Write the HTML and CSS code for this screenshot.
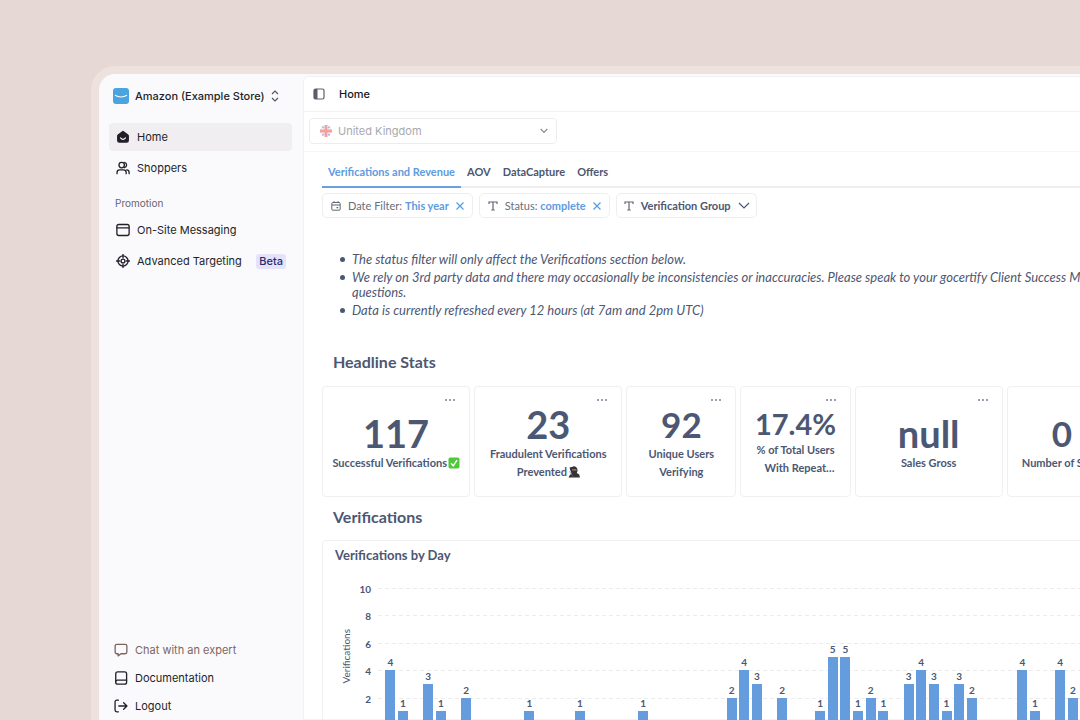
FILE: index.html
```html
<!DOCTYPE html>
<html lang="en">
<head>
<meta charset="utf-8">
<title>Home</title>
<link rel="stylesheet" href="styles.css">
</head>
<body>
<div class="frame">
  <aside class="sidebar">
    <button class="store" type="button">
      <svg class="store-logo" viewBox="0 0 16 16"><rect width="16" height="16" rx="3" fill="#4ba3df"/><path d="M2 7.300q6 3.400 12 0" fill="none" stroke="#fff" stroke-width="1.100"/></svg>
      <span>Amazon (Example Store)</span>
      <svg class="sort" viewBox="0 0 8 12"><path d="M1 4l3-3 3 3M1 8l3 3 3-3" fill="none" stroke="#55555e" stroke-width="1.200"/></svg>
    </button>
    <nav class="nav">
      <a class="nav-item active" href="#home">
        <svg class="icon" viewBox="0 0 16 16"><path d="M7 1.300a1.700 1.700 0 0 1 2 0l5 3.700q.8.700.8 1.700V12a2.700 2.700 0 0 1-2.700 2.700H3.900A2.700 2.700 0 0 1 1.200 12V6.700q0-1 .8-1.700z" fill="#221f29"/><path d="M5.200 9q2.800 3.400 5.600 0" fill="none" stroke="#fff" stroke-width="1.300" stroke-linecap="round"/></svg>
        Home</a>
      <a class="nav-item" href="#shoppers">
        <svg class="icon line" viewBox="0 0 16 16"><circle cx="6.500" cy="4.700" r="3.100"/><path d="M1.200 14.500v-1.300a3 3 0 0 1 3-3h4.400a3 3 0 0 1 3 3v1.300M9.800 1.600a3.100 3.100 0 0 1 0 6M12.300 10.200a3 3 0 0 1 2.700 3v1.300"/></svg>
        Shoppers</a>
    </nav>
    <h2 class="group">Promotion</h2>
    <nav class="nav">
      <a class="nav-item" href="#messaging">
        <svg class="icon line" viewBox="0 0 16 16"><rect x="1" y="1.700" width="14" height="12.600" rx="2.200"/><path d="M1 5.500h14"/></svg>
        On-Site Messaging</a>
      <a class="nav-item" href="#targeting">
        <svg class="icon line" viewBox="0 0 16 16"><circle cx="8" cy="8" r="5.800"/><circle cx="8" cy="8" r="2.200"/><path d="M8 .5v3.800M8 11.700v3.800M.5 8h3.800M11.700 8h3.800"/></svg>
        Advanced Targeting <span class="beta">Beta</span></a>
    </nav>
    <nav class="nav-foot">
      <a class="foot-item chat" href="#chat">
        <svg class="icon line" viewBox="0 0 16 16"><path d="M3.200 1.500h9.600a1.900 1.900 0 0 1 1.900 1.900v7a1.900 1.900 0 0 1-1.900 1.900H8L4.700 14.700v-2.400H3.200a1.900 1.900 0 0 1-1.900-1.900v-7a1.900 1.900 0 0 1 1.900-1.900z"/></svg>
        Chat with an expert</a>
      <a class="foot-item" href="#docs">
        <svg class="icon line" viewBox="0 0 16 16"><rect x="2" y="1" width="12.400" height="14" rx="2.200"/><path d="M2 12a1.800 1.800 0 0 1 1.800-1.500h10.600"/></svg>
        Documentation</a>
      <a class="foot-item" href="#logout">
        <svg class="icon line" viewBox="0 0 16 16"><path d="M5 1.300H3.200A2 2 0 0 0 1.200 3.300v9.400a2 2 0 0 0 2 2H5M5.500 8h9.200M11 4.200L14.800 8 11 11.800"/></svg>
        Logout</a>
    </nav>
  </aside>

  <main class="panel">
    <header class="topbar">
      <button class="plain" type="button" aria-label="Toggle sidebar"><svg class="toggle" viewBox="0 0 12 12"><rect x="1" y="1" width="10" height="10" rx="1.500" fill="none" stroke="#5d5d69" stroke-width="1.200"/><path d="M1 1h3.500v10H1z" fill="#5d5d69"/></svg></button>
      <h1>Home</h1>
    </header>
    <div class="region-row">
      <label class="region">
        <svg class="flag" viewBox="0 0 12 12"><circle cx="6" cy="6" r="6" fill="#f1f1fa"/><path d="M2.300 1.500l1.500 1.500M9.700 1.500L8.200 3M2.300 10.500L3.800 9M9.700 10.500L8.200 9" stroke="#a4aee0" stroke-width="1.200"/><path d="M6 0v12M0 6h12" stroke="#f5a09d" stroke-width="2.800"/></svg>
        <select aria-label="Country"><option>United Kingdom</option></select>
        <svg class="caret" viewBox="0 0 8 6"><path d="M.7 1l3.300 3.500L7.300 1" fill="none" stroke="#8b8b93" stroke-width="1.200"/></svg>
      </label>
    </div>

    <div class="dashboard">
      <nav class="tabs">
        <a class="tab current" href="#verifications">Verifications and Revenue</a>
        <a class="tab" href="#aov">AOV</a>
        <a class="tab" href="#capture">DataCapture</a>
        <a class="tab" href="#offers">Offers</a>
      </nav>
      <div class="filters">
        <div class="chip">
          <svg class="chip-icon" viewBox="0 0 10 10"><rect x=".8" y="1.500" width="8.400" height="7.700" rx="1" fill="none" stroke="#5f6672" /><path d="M1 4h8M3 .2v1.600M7 .2v1.600M5.500 6.700h1.700" stroke="#5f6672" stroke-width="1.200"/></svg>
          <span>Date Filter: <b>This year</b></span>
          <button class="plain clear" type="button" aria-label="Clear date filter"><svg viewBox="0 0 8 8"><path d="M.5.5l7 7M7.500.5l-7 7" stroke="#509ee3" stroke-width="1.200"/></svg></button>
        </div>
        <div class="chip">
          <svg class="chip-icon" viewBox="0 0 10 10"><path d="M1 3V1h8v2M5 1v8M3.300 9h3.400" fill="none" stroke="#5f6672" stroke-width="1.200"/></svg>
          <span>Status: <b>complete</b></span>
          <button class="plain clear" type="button" aria-label="Clear status"><svg viewBox="0 0 8 8"><path d="M.5.5l7 7M7.500.5l-7 7" stroke="#509ee3" stroke-width="1.200"/></svg></button>
        </div>
        <button class="chip group-chip" type="button">
          <svg class="chip-icon" viewBox="0 0 10 10"><path d="M1 3V1h8v2M5 1v8M3.300 9h3.400" fill="none" stroke="#5f6672" stroke-width="1.200"/></svg>
          <span>Verification Group</span>
          <svg class="chevron" viewBox="0 0 12 8"><path d="M1 1l5 5 5-5" fill="none" stroke="#4c5773" stroke-width="1.200"/></svg>
        </button>
      </div>

      <ul class="notes">
        <li>The status filter will only affect the Verifications section below.</li>
        <li>We rely on 3rd party data and there may occasionally be inconsistencies or inaccuracies. Please speak to your gocertify Client Success Manager if you have any questions.</li>
        <li>Data is currently refreshed every 12 hours (at 7am and 2pm UTC)</li>
      </ul>

      <h2 class="section">Headline Stats</h2>
      <div class="stats">
        <article class="card wide">
          <button class="plain dots" type="button" aria-label="More"><i></i><i></i><i></i></button>
          <strong class="large">117</strong>
          <p>Successful Verifications <svg class="emoji" viewBox="0 0 12 12"><rect x=".5" y=".5" width="11" height="11" rx="1.800" fill="#4fc83a"/><path d="M3 6.300l2.200 2.500L9 3.200" fill="none" stroke="#fff" stroke-width="1.400"/></svg></p>
        </article>
        <article class="card wide">
          <button class="plain dots" type="button" aria-label="More"><i></i><i></i><i></i></button>
          <strong class="large">23</strong>
          <p>Fraudulent Verifications Prevented <svg class="emoji" viewBox="0 0 12 12"><path d="M1.500 1.500L4 1Q6-.300 8 1q1.800 1.200 1.500 4l-.700 2 2.400 1.500.8 3H.5l1.300-2.500 1.800-1.500L2.500 5z" fill="#343238"/><path d="M4.200 3.300h4.300v1.200H4.200z" fill="#a98c70"/><path d="M1.500 5.500l3.500 5" stroke="#77747a" stroke-width=".7"/></svg></p>
        </article>
        <article class="card">
          <button class="plain dots" type="button" aria-label="More"><i></i><i></i><i></i></button>
          <strong class="medium">92</strong>
          <p>Unique Users Verifying</p>
        </article>
        <article class="card">
          <button class="plain dots" type="button" aria-label="More"><i></i><i></i><i></i></button>
          <strong class="small">17.4%</strong>
          <p>% of Total Users<br>&nbsp; &nbsp;With Repeat…</p>
        </article>
        <article class="card wide">
          <button class="plain dots" type="button" aria-label="More"><i></i><i></i><i></i></button>
          <strong class="large">null</strong>
          <p>Sales Gross</p>
        </article>
        <article class="card">
          <button class="plain dots" type="button" aria-label="More"><i></i><i></i><i></i></button>
          <strong class="medium">0</strong>
          <p>Number of Sales</p>
        </article>
      </div>

      <h2 class="section">Verifications</h2>
      <section class="chart-card">
        <h3>Verifications by Day</h3>
        <div class="chart">
          <div class="axis-title">Verifications</div>
          <div class="ticks"><span>10</span><span>8</span><span>6</span><span>4</span><span>2</span></div>
          <div class="plot">
            <div class="lines"><i></i><i></i><i></i><i></i><i></i></div>
            <div class="bars" id="bars"></div>
          </div>
        </div>
      </section>
    </div>
  </main>
</div>
<script src="chart.js"></script>
</body>
</html>
```
FILE: styles.css
```css
* { box-sizing: border-box; }

body {
  margin: 0;
  height: 100vh;
  padding: 66px 0 0 91px;
  overflow: hidden;
  background: #e6d8d4;
  color: #4c5773;
  font-family: Lato, "Liberation Sans", sans-serif;
}

h1, h2, h3, p, ul { margin: 0; }
a { color: inherit; text-decoration: none; }
button, select { font: inherit; color: inherit; }
svg { display: block; flex: none; }
.plain { padding: 0; border: 0; background: none; }

.frame {
  display: flex;
  width: 118%;
  height: 100%;
  border: 8px solid #ede2dd;
  border-bottom: 0;
  border-radius: 24px 24px 0 0;
  background: #fafafd;
  overflow: hidden;
}

/* Sidebar */
.sidebar {
  display: flex;
  flex: none;
  flex-direction: column;
  width: 204px;
  padding: 10px 11px 0 10px;
  color: #221f29;
  font: 400 11px/16px Inter, "Liberation Sans", sans-serif;
}
.store {
  display: flex;
  align-items: center;
  gap: 6px;
  height: 24px;
  margin-bottom: 15px;
  padding: 0 4px;
  border: 0;
  background: none;
  font-weight: 500;
  white-space: nowrap;
}
.store-logo { width: 16px; height: 16px; }
.sort { width: 8px; height: 12px; }
.nav { display: flex; flex-direction: column; gap: 3px; }
.nav-item {
  display: flex;
  align-items: center;
  gap: 7px;
  height: 28px;
  padding: 0 6px 0 7px;
  border-radius: 4px;
  white-space: nowrap;
}
.active { background: #f0eef1; }
.icon { width: 14px; height: 14px; }
.line { fill: none; stroke: currentColor; stroke-width: 1.5; stroke-linecap: round; stroke-linejoin: round; }
.group { margin: 13px 0 5px; padding-left: 6px; color: #68666f; font: inherit; font-size: 10px; line-height: 16px; }
.beta { margin-left: auto; padding: 0 3px; border-radius: 3px; background: #e4e3fb; color: #2d2a69; font-weight: 500; line-height: 15px; }
.nav-foot { margin-top: auto; }
.foot-item { display: flex; align-items: center; gap: 7px; height: 28px; padding-left: 5px; }
.chat { color: #7e655e; }

/* Main panel */
.panel {
  flex: 1;
  min-width: 0;
  margin-top: 2px;
  border: 1px solid #f2f2f5;
  border-radius: 6px 0 0 0;
  background: #fff;
}
.topbar { display: flex; align-items: center; gap: 14px; height: 35px; padding-left: 9px; border-bottom: 1px solid #f2f2f4; }
.topbar h1 { color: #18161d; font: 500 11px/16px Inter, "Liberation Sans", sans-serif; }
.toggle { width: 12px; height: 12px; }
.region-row { height: 40px; padding: 6px 5px; border-bottom: 1px solid #f5f5f7; }
.region {
  display: flex;
  align-items: center;
  gap: 6px;
  width: 248px;
  height: 26px;
  padding: 0 8px 0 10px;
  border: 1px solid #ededf0;
  border-radius: 4px;
}
.region select { flex: 1; padding: 0; border: 0; background: none; appearance: none; color: #a9a9af; font: 11px/16px Inter, "Liberation Sans", sans-serif; }
.flag { width: 12px; height: 12px; }
.caret { width: 8px; height: 6px; }

/* Dashboard */
.dashboard { padding: 6px 18px 0; }
.tabs { display: flex; gap: 12px; height: 30px; border-bottom: 2px solid #eeeef0; font-size: 11px; font-weight: 700; line-height: 28px; }
.tab { height: 30px; }
.current { padding: 0 6px; border-bottom: 2px solid #6a9fe2; color: #609be0; }
.tab.current { margin-right: -6px; }
.filters { display: flex; gap: 6px; margin-top: 5px; }
.chip {
  display: flex;
  align-items: center;
  gap: 7px;
  height: 25px;
  padding: 0 8px;
  border: 1px solid #eeeef0;
  border-radius: 5px;
  background: #fff;
  color: #696e7b;
  font-size: 11px;
  line-height: 16px;
}
.chip b { color: #609be0; }
.chip-icon { width: 10px; height: 10px; }
.clear svg { width: 8px; height: 8px; }
.group-chip { color: #4c5773; font-weight: 700; padding: 0 6px 0 7px; }
.chevron { width: 12px; height: 8px; }

.notes { margin: 34px 0; padding-left: 30px; font-size: 13px; font-style: italic; line-height: 15px; list-style: none; }
.notes li + li { margin-top: 3px; }
.notes li::before { content: ""; display: inline-block; width: 5px; height: 5px; margin: 0 7px 0 -12px; border-radius: 50%; background: currentColor; vertical-align: 2px; }
.section { padding-left: 11px; font-size: 16px; line-height: 20px; }

.stats { display: grid; grid-template-columns: repeat(24, 1fr); gap: 4px; margin: 14px 0 10px; }
.card {
  display: flex;
  grid-column: span 3;
  flex-direction: column;
  align-items: center;
  justify-content: center;
  position: relative;
  min-width: 0;
  height: 111px;
  padding: 1px 8px 0;
  border: 1px solid #f0f0f1;
  border-radius: 4px;
  text-align: center;
}
.wide { grid-column: span 4; }
.dots { display: flex; gap: 2px; position: absolute; top: 12px; right: 14px; }
.dots i { width: 2px; height: 2px; border-radius: 1px; background: #777f94; }
.card p { font-size: 11px; font-weight: 700; line-height: 18px; }
.card strong { line-height: 42px; }
.large { font-size: 38px; }
.medium { font-size: 35px; }
.card .small { font-size: 29px; line-height: 34px; }
.emoji { display: inline-block; width: 12px; height: 12px; margin-left: -2px; vertical-align: -2px; }

.chart-card { margin-top: 13px; padding: 5px 7px 0 12px; border: 1px solid #f0f0f1; border-radius: 4px; }
.chart-card h3 { font-size: 13px; line-height: 18px; }
.chart { display: grid; grid-template-columns: 22px 14px 1fr; margin-top: 24px; font-size: 10px; font-weight: 700; }
.axis-title { align-self: center; justify-self: center; writing-mode: vertical-rl; transform: rotate(180deg); font-weight: 400; line-height: 14px; }
.ticks { display: flex; flex-direction: column; height: 137px; text-align: right; }
.ticks span { flex: 1; line-height: 2px; }
.plot { display: grid; height: 137px; margin-left: 7px; }
.lines, .bars { grid-area: 1 / 1; }
.lines { display: flex; flex-direction: column; }
.lines i { flex: 1; background: repeating-linear-gradient(90deg, #ececee 0 4px, transparent 4px 7px) top / 100% 1px no-repeat; }
.bars { display: flex; align-items: flex-end; padding: 0 5px 0 6px; }
.slot { display: flex; flex: 1; flex-direction: column; align-items: center; justify-content: flex-end; height: 100%; min-width: 0; }
.slot span { line-height: 16px; }
.bar { flex: none; width: 10px; background: #649cde; }
```
FILE: chart.js
```js
const days = [
  4, 1, 0, 3, 1, 0, 2, 0, 0, 0, 0, 1, 0, 0, 0, 1, 0, 0, 0, 0, 1, 0, 0, 0, 0, 0, 0,
  2, 4, 3, 0, 2, 0, 0, 1, 5, 5, 1, 2, 1, 0, 3, 4, 3, 1, 3, 2, 0, 0, 0, 4, 1, 0, 4, 2,
  6, 0, 2, 1, 0, 3, 0, 1, 0, 2, 0
];
const maximum = 10;
const bars = document.getElementById("bars");

for (const count of days) {
  const slot = document.createElement("div");
  slot.className = "slot";
  if (count > 0) {
    const label = document.createElement("span");
    label.textContent = count;
    const bar = document.createElement("div");
    bar.className = "bar";
    bar.style.height = (count / maximum) * 100 + "%";
    slot.append(label, bar);
  }
  bars.append(slot);
}
```
